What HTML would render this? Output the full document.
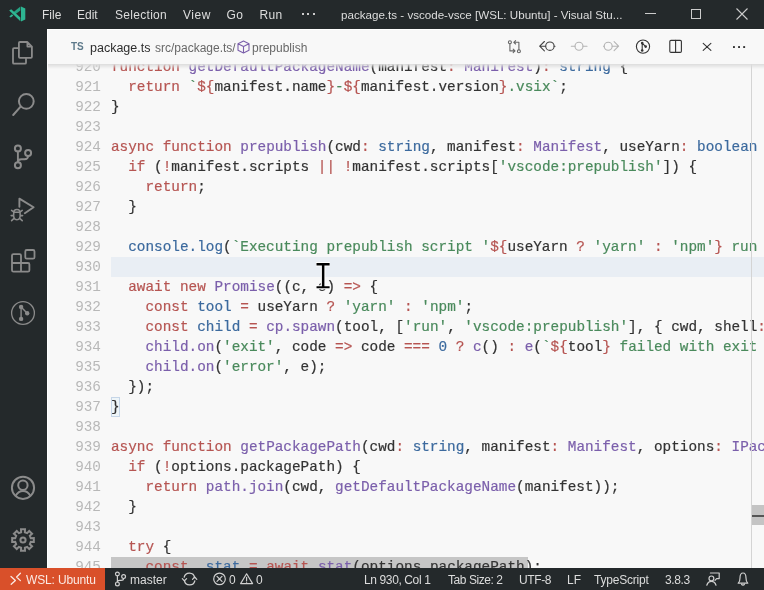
<!DOCTYPE html>
<html><head><meta charset="utf-8">
<style>
*{margin:0;padding:0;box-sizing:border-box}
html,body{width:764px;height:590px;overflow:hidden;background:#f8f8f8}
body{position:relative;font-family:"Liberation Sans",sans-serif}
.abs{position:absolute}
#title{left:0;top:0;width:764px;height:29px;background:#24292b}
#title .m{position:absolute;top:7.5px;font-size:12px;color:#dddddd;line-height:14px;white-space:nowrap}
#act{left:0;top:29px;width:47px;height:539px;background:#24292b}
#act svg{position:absolute}
#crumb{left:47px;top:29px;width:717px;height:35px;background:#f8f8f8;border-left:1px solid #fff;border-top:1px solid #fff}
#editor{left:47px;top:64px;width:717px;height:504px;background:#f8f8f8;overflow:hidden}
#shadow{left:48px;top:64px;width:716px;height:5px;background:linear-gradient(#dcdcdc,rgba(248,248,248,0))}
.ln{position:absolute;left:0;width:54px;text-align:right;font-family:"Liberation Mono",monospace;font-size:14.37px;line-height:20px;color:#b8b8b8;white-space:pre}
.cl{position:absolute;left:64px;-webkit-text-stroke:0.2px;font-family:"Liberation Mono",monospace;font-size:14.37px;line-height:20px;color:#333;white-space:pre}
.k{color:#b65552}.f{color:#7b5fab}.t{color:#3c6a9e}.s{color:#4a8a5c}.o{color:#b65552}
#status{left:0;top:568px;width:764px;height:22px;background:#24292b}
#status .m{position:absolute;top:5px;font-size:12px;color:#dcdcdc;line-height:14px;white-space:nowrap}
#title,#status,#editor,#crumb{will-change:transform}
</style></head><body>

<div id="title" class="abs">
  <svg class="abs" style="left:0;top:0" width="30" height="29" viewBox="0 0 30 29">
    <path d="M20.4 6.6 V10.4 L14.6 14.8 L12.4 13 Z" fill="#25a283"/>
    <path d="M9.2 10.6 L11.2 9.2 L20.4 17.4 V21.3 Z" fill="#2fb793"/>
    <path d="M9.3 16.4 L11.9 14.2 L13.3 15.4 L10.8 17.6 Z" fill="#2fb793"/>
    <path d="M21 6.4 L25.3 8.4 V19.6 L21 21.5 Z" fill="#2db592"/>
  </svg>
  <div class="m" style="left:42px">File</div>
  <div class="m" style="left:77px">Edit</div>
  <div class="m" style="left:115px;letter-spacing:0.3px">Selection</div>
  <div class="m" style="left:183px;letter-spacing:0.5px">View</div>
  <div class="m" style="left:226.5px;letter-spacing:0.3px">Go</div>
  <div class="m" style="left:259.5px;letter-spacing:0.3px">Run</div>
  <div class="abs" style="left:301.5px;top:12.8px;width:2px;height:2px;background:#ccc"></div><div class="abs" style="left:307.2px;top:12.8px;width:2px;height:2px;background:#ccc"></div><div class="abs" style="left:312.6px;top:12.8px;width:2px;height:2px;background:#ccc"></div>
  <div class="m" style="left:341px;font-size:11.6px">package.ts - vscode-vsce [WSL: Ubuntu] - Visual Stu...</div>
  <div class="abs" style="left:645px;top:13px;width:11px;height:1px;background:#ccc"></div>
  <div class="abs" style="left:691px;top:9px;width:10px;height:10px;border:1px solid #ccc"></div>
  <svg class="abs" style="left:736px;top:8px" width="12" height="12" viewBox="0 0 12 12"><path d="M0.5 0.5 L11.5 11.5 M11.5 0.5 L0.5 11.5" stroke="#ccc" stroke-width="1.1"/></svg>
</div>

<div id="act" class="abs"></div>
<svg class="abs" style="left:0;top:0" width="47" height="590" viewBox="0 0 47 590" fill="none" stroke="#8b8b8b" stroke-width="2" stroke-linecap="round" stroke-linejoin="round">
  <path d="M18.9 43 q0 -1 1 -1 H27.2 L31.9 46.6 V56.8 q0 1 -1 1 H19.9 q-1 0 -1 -1 Z M27.4 42.2 V46.6 H31.7" stroke-linecap="butt" stroke-width="1.8"/>
  <path d="M18.9 48.2 H14 q-1 0 -1 1 V62.7 q0 1 1 1 H25 q1 0 1 -1 V57.8" stroke-linecap="butt" stroke-width="1.8"/>
  <circle cx="26.3" cy="101.35" r="7.4"/>
  <path d="M20.6 106.6 L13.2 115"/>
  <circle cx="17.9" cy="148.4" r="3"/>
  <circle cx="17.9" cy="165.2" r="3"/>
  <circle cx="28.1" cy="153" r="3"/>
  <path d="M17.9 151.4 V162.2 M28.1 156 C28.1 158.3 26.8 159.2 24.5 159.2 H21.5 C19.2 159.2 17.9 160 17.9 162.2" stroke-width="1.9"/>
  <path d="M19.4 206.8 V198.6 L33.6 207.3 L24.8 213.2" stroke-width="1.9"/>
  <path d="M13.8 212.2 C13.8 208.5 20 208.5 20 212.2 M13.8 212.2 H20 M13.8 212.2 C13 218 14.5 219.8 16.9 219.8 C19.3 219.8 20.8 218 20 212.2 M11.6 210.4 L13.6 212 M11.2 215.6 H13.7 M11.6 220.6 L13.8 218.6 M22.2 210.4 L20.2 212 M22.6 215.6 H20.1 M22.2 220.6 L20 218.6" stroke-width="1.6"/>
  <path d="M13.5 254.1 H19.5 q1.5 0 1.5 1.5 V263 H28 q1.4 0 1.4 1.4 V270.2 q0 1.5 -1.5 1.5 H13.5 q-1.5 0 -1.5 -1.5 V255.6 q0 -1.5 1.5 -1.5 Z M12 263 H21 V271.7" stroke-width="1.8"/>
  <rect x="25.3" y="250" width="9.2" height="8.7" rx="1.5" stroke-width="1.8"/>
  <circle cx="23" cy="313" r="11.4" stroke-width="1.3"/>
  <path d="M21.1 306.9 V318.9 M21.1 306.9 L27.2 313.3" stroke-width="1.4"/>
  <circle cx="21.1" cy="306.9" r="2.2" fill="#8b8b8b" stroke="none"/>
  <circle cx="27.2" cy="313.3" r="2.2" fill="#8b8b8b" stroke="none"/>
  <circle cx="21.1" cy="318.9" r="2.2" fill="#8b8b8b" stroke="none"/>
  <circle cx="23" cy="487.8" r="11.1"/>
  <circle cx="22.9" cy="485.2" r="4.7"/>
  <path d="M15.8 495.6 C17.5 492.5 20 491 23 491 C26 491 28.5 492.5 30.2 495.6"/>
  <path d="M21.13 532.22 L21.00 529.18 L25.00 529.18 L24.87 532.22 L27.18 533.18 L29.23 530.93 L32.07 533.77 L29.82 535.82 L30.78 538.13 L33.82 538.00 L33.82 542.00 L30.78 541.87 L29.82 544.18 L32.07 546.23 L29.23 549.07 L27.18 546.82 L24.87 547.78 L25.00 550.82 L21.00 550.82 L21.13 547.78 L18.82 546.82 L16.77 549.07 L13.93 546.23 L16.18 544.18 L15.22 541.87 L12.18 542.00 L12.18 538.00 L15.22 538.13 L16.18 535.82 L13.93 533.77 L16.77 530.93 L18.82 533.18 Z" stroke-linejoin="miter"/>
  <circle cx="23" cy="540" r="2.6"/>
</svg>

<div id="crumb" class="abs">
  <div class="abs" style="left:23px;top:11px;font-size:10px;font-weight:bold;color:#5e7a8b;line-height:12px">TS</div>
  <div class="abs" style="left:42px;top:10px;font-size:12.5px;color:#2e2e2e;line-height:16px">package.ts</div>
  <div class="abs" style="left:107px;top:11px;font-size:12px;color:#686868;line-height:15px">src/package.ts/</div>
  <svg class="abs" style="left:189px;top:10px" width="13" height="14" viewBox="0 0 13 14"><path d="M6.5 1 L12 3.8 V10.2 L6.5 13 L1 10.2 V3.8 Z M1 3.8 L6.5 6.6 L12 3.8 M6.5 6.6 V13" fill="none" stroke="#7b5fab" stroke-width="1.1" stroke-linejoin="round"/></svg>
  <div class="abs" style="left:204px;top:11px;font-size:12px;color:#686868;line-height:15px">prepublish</div>
</div>
<svg class="abs" style="left:0;top:0" width="764" height="64" viewBox="0 0 764 64" fill="none" stroke="#424242" stroke-width="1.1" stroke-linecap="round" stroke-linejoin="round">
  <circle cx="509.9" cy="42.3" r="1.5" stroke="#666"/>
  <circle cx="518.9" cy="51.2" r="1.5" stroke="#666"/>
  <path d="M509.9 43.8 V50.9 H515 M513.2 49.2 L515 50.9 L513.2 52.6 M518.9 49.7 V42.3 H513.8 M515.6 40.6 L513.8 42.3 L515.6 44" stroke="#666"/>
  <path d="M544.4 41.5 L539.7 46.2 L544.4 50.9 M539.7 46.2 H545.6 M554.2 46.2 H555"/>
  <circle cx="549.9" cy="46.2" r="4.2"/>
  <path d="M571.3 46.2 H575 M583 46.2 H587" stroke="#b4b4b4"/>
  <circle cx="579" cy="46.2" r="4" stroke="#b4b4b4"/>
  <path d="M603.5 46.2 H604.2 M612.2 46.2 H618.6 M614.1 41.7 L618.6 46.2 L614.1 50.7" stroke="#b4b4b4"/>
  <circle cx="608.2" cy="46.2" r="4" stroke="#b4b4b4"/>
  <circle cx="643" cy="46.6" r="6.6" stroke="#333"/>
  <path d="M642.2 43.1 V50.5 M642.2 43.1 L645.7 46.6" stroke="#333"/>
  <circle cx="642.2" cy="43.1" r="1.3" fill="#333" stroke="none"/>
  <circle cx="645.7" cy="46.6" r="1.3" fill="#333" stroke="none"/>
  <circle cx="642.2" cy="50.5" r="1.3" fill="#333" stroke="none"/>
  <rect x="669.8" y="40.4" width="11.6" height="12" rx="1.2" stroke="#333"/>
  <path d="M675.6 40.4 V52.4" stroke="#333"/>
  <path d="M703.2 43.3 L710.9 50.4 M710.9 43.3 L703.2 50.4" stroke="#333"/>
  <rect x="733" y="46.1" width="1.9" height="1.9" fill="#333" stroke="none"/>
  <rect x="738.1" y="46.1" width="1.9" height="1.9" fill="#333" stroke="none"/>
  <rect x="743.2" y="46.1" width="1.9" height="1.9" fill="#333" stroke="none"/>
</svg>
</div>

<div id="editor" class="abs">
  <div class="abs" style="left:64px;top:193px;width:660px;height:20px;background:#e9eef4"></div>
  <div class="abs" style="left:64px;top:333px;width:9px;height:20px;background:#eef5f8;border:1px solid #c6d6e8"></div>
  <div class="abs" style="left:64px;top:493px;width:417px;height:20px;background:#c6c6c6"></div>
<div class="ln" style="top:-7px">920</div>
<div class="cl" style="top:-7px"><span class="k">function</span> <span class="f">getDefaultPackageName</span>(manifest<span class="k">:</span> <span class="f">Manifest</span>)<span class="k">:</span> <span class="t">string</span> {</div>
<div class="ln" style="top:13px">921</div>
<div class="cl" style="top:13px">  <span class="k">return</span> <span class="s">`</span><span class="k">${</span>manifest.name<span class="k">}</span><span class="s">-</span><span class="k">${</span>manifest.version<span class="k">}</span><span class="s">.vsix`</span>;</div>
<div class="ln" style="top:33px">922</div>
<div class="cl" style="top:33px">}</div>
<div class="ln" style="top:53px">923</div>
<div class="cl" style="top:53px"></div>
<div class="ln" style="top:73px">924</div>
<div class="cl" style="top:73px"><span class="k">async</span> <span class="k">function</span> <span class="f">prepublish</span>(cwd<span class="k">:</span> <span class="t">string</span>, manifest<span class="k">:</span> <span class="f">Manifest</span>, useYarn<span class="k">:</span> <span class="t">boolean</span></div>
<div class="ln" style="top:93px">925</div>
<div class="cl" style="top:93px">  <span class="k">if</span> (<span class="k">!</span>manifest.scripts <span class="k">||</span> <span class="k">!</span>manifest.scripts[<span class="s">'vscode:prepublish'</span>]) {</div>
<div class="ln" style="top:113px">926</div>
<div class="cl" style="top:113px">    <span class="k">return</span>;</div>
<div class="ln" style="top:133px">927</div>
<div class="cl" style="top:133px">  }</div>
<div class="ln" style="top:153px">928</div>
<div class="cl" style="top:153px"></div>
<div class="ln" style="top:173px">929</div>
<div class="cl" style="top:173px">  <span class="t">console.log</span>(<span class="s">`Executing prepublish script '</span><span class="k">${</span>useYarn <span class="k">?</span> <span class="s">'yarn'</span> <span class="k">:</span> <span class="s">'npm'</span><span class="k">}</span><span class="s"> run</span></div>
<div class="ln" style="top:193px">930</div>
<div class="cl" style="top:193px"></div>
<div class="ln" style="top:213px">931</div>
<div class="cl" style="top:213px">  <span class="k">await</span> <span class="k">new</span> <span class="f">Promise</span>((c, e) <span class="k">=&gt;</span> {</div>
<div class="ln" style="top:233px">932</div>
<div class="cl" style="top:233px">    <span class="k">const</span> <span class="t">tool</span> <span class="k">=</span> useYarn <span class="k">?</span> <span class="s">'yarn'</span> <span class="k">:</span> <span class="s">'npm'</span>;</div>
<div class="ln" style="top:253px">933</div>
<div class="cl" style="top:253px">    <span class="k">const</span> <span class="t">child</span> <span class="k">=</span> <span class="f">cp.spawn</span>(tool, [<span class="s">'run'</span>, <span class="s">'vscode:prepublish'</span>], { cwd, shell<span class="k">:</span></div>
<div class="ln" style="top:273px">934</div>
<div class="cl" style="top:273px">    <span class="f">child.on</span>(<span class="s">'exit'</span>, code <span class="k">=&gt;</span> code <span class="k">===</span> <span class="t">0</span> <span class="k">?</span> <span class="f">c</span>() <span class="k">:</span> <span class="f">e</span>(<span class="s">`</span><span class="k">${</span>tool<span class="k">}</span><span class="s"> failed with exit</span></div>
<div class="ln" style="top:293px">935</div>
<div class="cl" style="top:293px">    <span class="f">child.on</span>(<span class="s">'error'</span>, e);</div>
<div class="ln" style="top:313px">936</div>
<div class="cl" style="top:313px">  });</div>
<div class="ln" style="top:333px">937</div>
<div class="cl" style="top:333px">}</div>
<div class="ln" style="top:353px">938</div>
<div class="cl" style="top:353px"></div>
<div class="ln" style="top:373px">939</div>
<div class="cl" style="top:373px"><span class="k">async</span> <span class="k">function</span> <span class="f">getPackagePath</span>(cwd<span class="k">:</span> <span class="t">string</span>, manifest<span class="k">:</span> <span class="f">Manifest</span>, options<span class="k">:</span> <span class="f">IPac</span></div>
<div class="ln" style="top:393px">940</div>
<div class="cl" style="top:393px">  <span class="k">if</span> (<span class="k">!</span>options.packagePath) {</div>
<div class="ln" style="top:413px">941</div>
<div class="cl" style="top:413px">    <span class="k">return</span> <span class="f">path.join</span>(cwd, <span class="f">getDefaultPackageName</span>(manifest));</div>
<div class="ln" style="top:433px">942</div>
<div class="cl" style="top:433px">  }</div>
<div class="ln" style="top:453px">943</div>
<div class="cl" style="top:453px"></div>
<div class="ln" style="top:473px">944</div>
<div class="cl" style="top:473px">  <span class="k">try</span> {</div>
<div class="ln" style="top:493px">945</div>
<div class="cl" style="top:493px">    <span class="k">const</span> <span class="t">_stat</span> <span class="k">=</span> <span class="k">await</span> <span class="f">stat</span>(options.packagePath);</div>
  <div class="abs" style="left:704px;top:0;width:1px;height:504px;background:#d4d4d4"></div>
  <div class="abs" style="left:705px;top:441px;width:12px;height:20px;background:#c4c4c4"></div>
  <div class="abs" style="left:705px;top:451px;width:12px;height:2px;background:#555"></div>
</div>
<div id="shadow" class="abs"></div>
<div class="abs" style="left:47px;top:64px;width:1px;height:504px;background:#fff"></div>

<div id="status" class="abs">
  <div class="abs" style="left:0;top:0;width:105px;height:22px;background:#d9502a"></div>
  <svg class="abs" style="left:0;top:0" width="764" height="22" viewBox="0 568 764 22" fill="none" stroke="#cfcfcf" stroke-width="1.2" stroke-linecap="round" stroke-linejoin="round">
    <path d="M11 576.4 L15.4 580.4 L11.2 584.3 M20.4 573.2 L16.6 577 L20.4 580.6" stroke="#fbe9e3" stroke-width="1.3"/>
    <circle cx="117.4" cy="574" r="1.9"/><circle cx="123.6" cy="576.6" r="1.9"/><circle cx="117.4" cy="583.9" r="1.9"/>
    <path d="M117.4 575.9 V582 M123.6 578.5 C123.6 580 122.6 580.4 121 580.4 H119.5 C118.2 580.4 117.4 581 117.4 582"/>
    <path d="M184.2 577.2 A5.3 5.3 0 0 1 194.6 577.6 M194.8 580.8 A5.3 5.3 0 0 1 184.4 580.4" stroke-width="1.3"/>
    <path d="M182.3 578.6 L184.4 580.9 L186.6 578.6 M192.5 579.4 L194.7 577 L196.8 579.4" stroke-width="1.2"/>
    <circle cx="219.5" cy="578.9" r="5.8"/>
    <path d="M217 576.4 L222 581.4 M222 576.4 L217 581.4"/>
    <path d="M246.6 573.8 L252.6 583.6 H240.6 Z M246.6 577.3 V580.6 M246.6 582 V582.2"/>
    <path d="M710.4 573 H719.2 V578.6 H716.6 L715 580.4" stroke-width="1.2"/>
    <circle cx="711.4" cy="578.4" r="2.4"/>
    <path d="M706.8 585.2 C707.8 582.3 709.4 581.4 711.4 581.4 C713.4 581.4 715 582.3 716 585.2"/>
    <path d="M738.2 583.2 C739.8 582 740 580.6 740 578 C740 574.8 741.5 573 743 573 C744.5 573 746 574.8 746 578 C746 580.6 746.2 582 747.8 583.2 Z M741.6 584.4 C742.2 585.3 743.8 585.3 744.4 584.4"/>
  </svg>
  <div class="m" style="left:26px;color:#fbeae4;letter-spacing:-0.15px">WSL: Ubuntu</div>
  <div class="m" style="left:130px">master</div>
  <div class="m" style="left:229px">0</div>
  <div class="m" style="left:256px">0</div>
  <div class="m" style="left:364px;letter-spacing:-0.38px">Ln 930, Col 1</div>
  <div class="m" style="left:448px;letter-spacing:-0.45px">Tab Size: 2</div>
  <div class="m" style="left:519px;letter-spacing:-0.4px">UTF-8</div>
  <div class="m" style="left:567px">LF</div>
  <div class="m" style="left:594px;letter-spacing:-0.2px">TypeScript</div>
  <div class="m" style="left:665px;letter-spacing:-0.4px">3.8.3</div>
</div>

<svg class="abs" style="left:312px;top:259px" width="22" height="34" viewBox="312 259 22 34">
  <path d="M316 262 H330 V266.5 H325.4 V285.2 H330 V289.3 H316 V285.2 H320.8 V266.5 H316 Z" fill="#fff"/>
  <path d="M316.5 263.1 H329.6 V265.4 H324.4 V286.2 H329.6 V288.3 H316.5 V286.2 H321.9 V265.4 H316.5 Z" fill="#000"/>
</svg>
</body></html>
